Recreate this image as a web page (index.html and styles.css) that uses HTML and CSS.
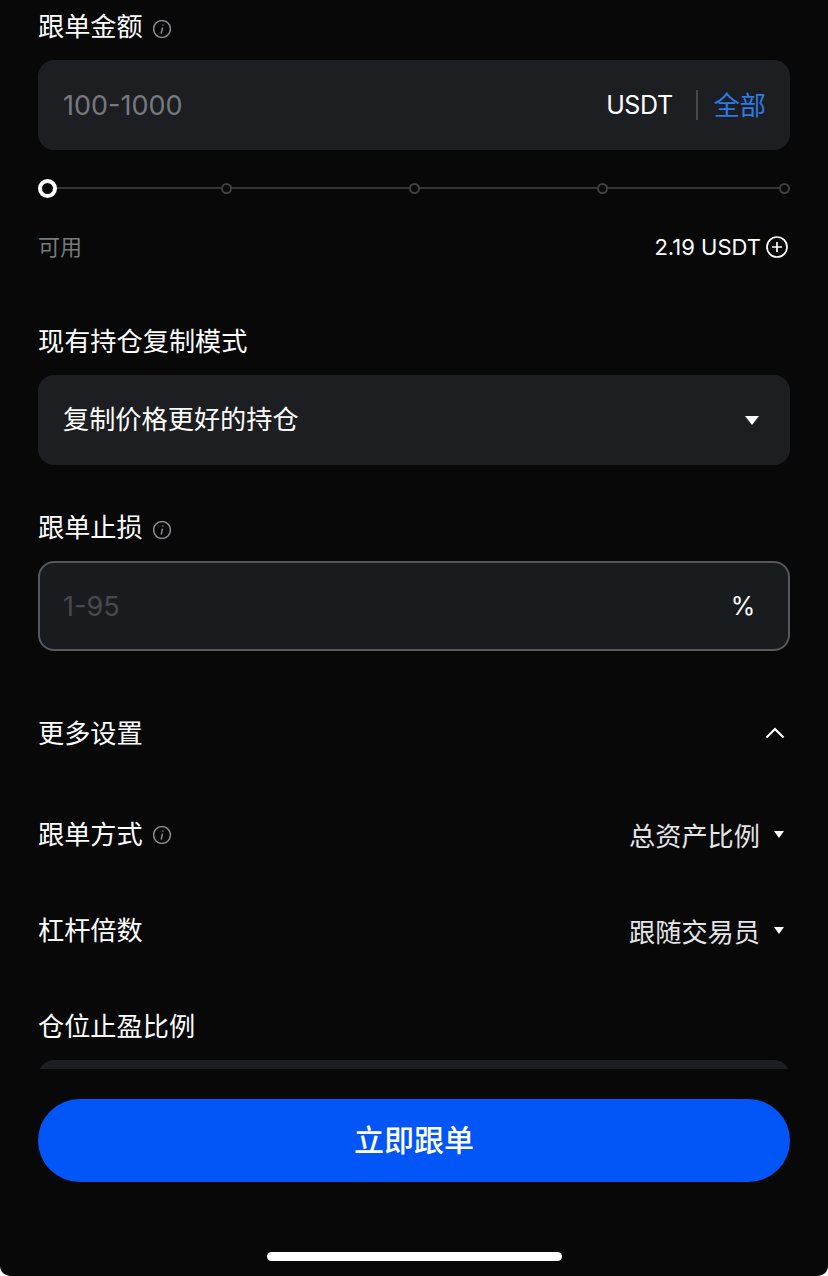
FILE: index.html
```html
<!DOCTYPE html>
<html lang="zh-CN">

<head>
    <meta charset="UTF-8">
    <meta name="viewport" content="width=device-width, initial-scale=1.0">
    <title>跟单设置</title>
    <link rel="stylesheet" href="styles.css">
</head>

<body>
    <main class="page">
        <div class="form">
            <div class="label first">
                <span>跟单金额</span>
                <svg class="info" viewBox="0 0 18 18"><circle cx="9" cy="9" r="8.4" /><path d="M9.9 4.5v1M9.5 7.7 8.2 13.5" /></svg>
            </div>
            <div class="field">
                <span class="placeholder">100-1000</span>
                <span class="unit">USDT</span>
                <span class="divider"></span>
                <span class="all">全部</span>
            </div>

            <div class="slider">
                <span class="line"></span>
                <span class="thumb"></span>
                <span class="stop s1"></span>
                <span class="stop s2"></span>
                <span class="stop s3"></span>
                <span class="stop s4"></span>
            </div>

            <div class="balance">
                <span class="muted">可用</span>
                <span class="amount">2.19 USDT
                    <svg class="plus" viewBox="0 0 22 22"><circle cx="11" cy="11" r="10" /><path d="M11 6v10M6 11h10" /></svg>
                </span>
            </div>

            <div class="label mode">现有持仓复制模式</div>
            <div class="field select">
                <span class="value">复制价格更好的持仓</span>
                <span class="caret big"></span>
            </div>

            <div class="label stoploss">
                <span>跟单止损</span>
                <svg class="info" viewBox="0 0 18 18"><circle cx="9" cy="9" r="8.4" /><path d="M9.9 4.5v1M9.5 7.7 8.2 13.5" /></svg>
            </div>
            <div class="field focused">
                <span class="placeholder dim">1-95</span>
                <span class="unit percent">%</span>
            </div>

            <div class="row more">
                <span>更多设置</span>
                <svg class="chevron" viewBox="0 0 20 12"><path d="M1.5 10.5 10 2l8.5 8.5" /></svg>
            </div>

            <div class="row method">
                <span class="with-info">跟单方式
                    <svg class="info" viewBox="0 0 18 18"><circle cx="9" cy="9" r="8.4" /><path d="M9.9 4.5v1M9.5 7.7 8.2 13.5" /></svg>
                </span>
                <span class="choice">总资产比例<span class="caret"></span></span>
            </div>
            <div class="row leverage">
                <span>杠杆倍数</span>
                <span class="choice">跟随交易员<span class="caret"></span></span>
            </div>

            <div class="label takeprofit">仓位止盈比例</div>
            <div class="field"></div>
        </div>

        <div class="footer">
            <button class="submit">立即跟单</button>
            <div class="home-bar"></div>
        </div>
    </main>
</body>

</html>
```

FILE: styles.css
```css
* {
    box-sizing: border-box;
    font-family: "Inter", "Noto Sans CJK SC", sans-serif;
}

html,
body {
    margin: 0;
    height: 100%;
    background-color: #fff;
}

.page {
    width: 828px;
    height: 1276px;
    overflow: hidden;
    border-radius: 0 0 10px 10px;
    background-color: #080809;
    color: #fff;
}

.form {
    height: 1069px;
    overflow: hidden;
    padding: 0 38px;
}

.label {
    display: flex;
    align-items: center;
    gap: 10px;
    height: 36px;
    font-size: 26.2px;
    line-height: 36px;
}

.label.first {
    margin-top: 9px;
    margin-bottom: 15px;
}

.label.mode {
    margin-top: 61px;
    margin-bottom: 15px;
}

.label.stoploss {
    margin-top: 45px;
    margin-bottom: 15px;
}

.label.takeprofit {
    margin-top: 62px;
    margin-bottom: 15px;
}

.info {
    width: 18px;
    height: 18px;
    margin-top: 3px;
    fill: none;
    stroke: #8a8c8f;
    stroke-width: 1.5;
}

.field {
    display: flex;
    align-items: center;
    height: 90px;
    padding: 0 24px 0 25px;
    border-radius: 16px;
    background-color: #1c1e21;
    font-size: 26.2px;
    flex-shrink: 0;
}

.field.focused {
    border: 2px solid #55585c;
    padding: 0 23px;
    background-color: #191c1e;
}

.placeholder {
    flex: 1;
    font-size: 27px;
    color: #77797c;
}

.placeholder.dim {
    color: #47494c;
}

.unit {
    font-size: 25px;
    letter-spacing: -0.4px;
}

.percent {
    margin-right: 10px;
}

.divider {
    width: 2px;
    height: 30px;
    margin: 0 16px 0 23px;
    background-color: #45484c;
}

.all {
    padding-bottom: 3px;
    color: #2d7be5;
}

.value {
    flex: 1;
    padding-bottom: 5px;
}

.caret {
    display: inline-block;
    width: 0;
    height: 0;
    margin-left: 14px;
    border-left: 5px solid transparent;
    border-right: 5px solid transparent;
    border-top: 7px solid #fff;
}

.caret.big {
    margin-right: 7px;
    border-left-width: 7px;
    border-right-width: 7px;
    border-top-width: 9px;
}

/* stops sit on the track at quarters, the last one is held inside the end */
.slider {
    position: relative;
    height: 20px;
    margin-top: 28px;
}

.line {
    position: absolute;
    top: 9px;
    left: 0;
    right: 0;
    height: 2px;
    background-color: #333537;
}

.thumb {
    position: absolute;
    top: 0.5px;
    left: 0;
    width: 19px;
    height: 19px;
    border: 4px solid #fff;
    border-radius: 50%;
    background-color: #080809;
}

.stop {
    position: absolute;
    top: 4.5px;
    width: 11px;
    height: 11px;
    margin-left: -5px;
    border: 2px solid #3f4143;
    border-radius: 50%;
    background-color: #080809;
}

.s1 {
    left: 25%;
}

.s2 {
    left: 50%;
}

.s3 {
    left: 75%;
}

.s4 {
    right: 0;
}

.balance {
    display: flex;
    justify-content: space-between;
    align-items: center;
    height: 32px;
    margin-top: 33px;
    font-size: 22px;
}

.muted {
    padding-bottom: 4px;
    color: #77797c;
}

.amount {
    display: flex;
    align-items: center;
    gap: 5px;
    padding-right: 2px;
}

.plus {
    width: 22px;
    height: 22px;
    fill: none;
    stroke: #fff;
    stroke-width: 1.7;
}

.row {
    display: flex;
    justify-content: space-between;
    align-items: center;
    height: 36px;
    font-size: 26.2px;
}

.row.more {
    margin-top: 63px;
}

.row.method {
    margin-top: 65px;
}

.row.leverage {
    margin-top: 60px;
}

.with-info {
    display: flex;
    align-items: center;
    gap: 10px;
}

.chevron {
    width: 20px;
    height: 12px;
    margin: 1px 5px 0 0;
    fill: none;
    stroke: #fff;
    stroke-width: 2.2;
}

.choice {
    display: flex;
    align-items: center;
    margin-right: 6px;
    padding-top: 3px;
    color: #e4e5e6;
}

.footer {
    padding: 30px 38px 0;
}

.submit {
    display: block;
    width: 100%;
    height: 83px;
    padding-bottom: 6px;
    border: none;
    border-radius: 42px;
    background-color: #0256f7;
    color: #fff;
    font-size: 30px;
    font-weight: 500;
}

.home-bar {
    width: 295px;
    height: 9px;
    margin: 70px auto 0;
    border-radius: 5px;
    background-color: #fff;
}
```
